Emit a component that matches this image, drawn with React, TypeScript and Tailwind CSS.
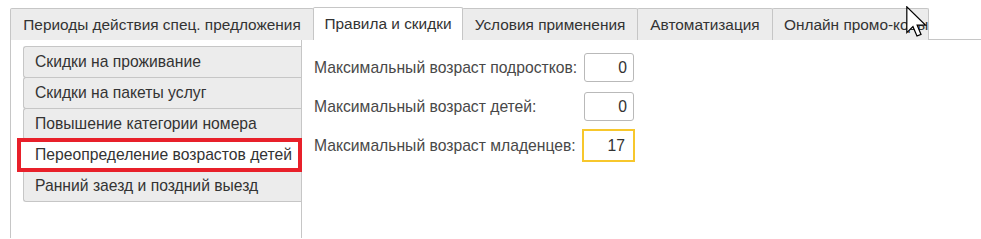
import React from "react"

const tabs = [
  { label: "Периоды действия спец. предложения", w: "w-[304px]" },
  { label: "Правила и скидки", w: "w-[150px]", active: true },
  { label: "Условия применения", w: "w-[176px]" },
  { label: "Автоматизация", w: "w-[136px]" },
  { label: "Онлайн промо-коды", w: "w-[157px]" },
]

const menu = [
  "Скидки на проживание",
  "Скидки на пакеты услуг",
  "Повышение категории номера",
  "Переопределение возрастов детей",
  "Ранний заезд и поздний выезд",
]

function Cursor() {
  return (
    <svg
      className="absolute left-[906px] top-[6px]"
      width="21"
      height="31"
      viewBox="0 0 13 19.2"
    >
      <path
        d="M0.5 0.5 L0.5 16.5 L4.3 12.8 L6.8 18.6 L9.3 17.6 L6.9 11.9 L12.2 11.9 Z"
        fill="#ffffff"
        stroke="#000000"
        strokeWidth="0.75"
        strokeLinejoin="miter"
      />
    </svg>
  )
}

export default function App() {
  return (
    <div className="relative w-[981px] h-[239px] bg-white overflow-hidden pt-2 pl-[10px] text-[15.7px] text-[#333333] font-['Liberation_Sans',Arial,sans-serif]">
      {/* TABS */}
      <div className="flex items-end h-[32px] text-[15.4px]">
        {tabs.map((t, i) => (
          <div
            key={t.label}
            className={`${t.w} ${i > 0 ? "-ml-px" : ""} ${
              t.active ? "bg-white h-[33px] relative z-10" : "bg-[#ececec] h-[32px]"
            } border border-b-0 border-[#c6c6c6] rounded-t-[2px] flex items-center whitespace-nowrap ${
              i === tabs.length - 1 ? "justify-start pl-[11px] overflow-hidden" : "justify-center"
            }`}
          >
            {t.label}
          </div>
        ))}
      </div>

      {/* PANEL */}
      <div className="flex h-[199px] border-t border-l border-[#c6c6c6] -mt-px">
        {/* LEFT MENU */}
        <div className="w-[291px] border-r border-[#c6c6c6] pl-[12px] pt-[6px] flex flex-col">
          {menu.map((m, i) => {
            const selected = i === 3
            return (
              <div
                key={m}
                className={`relative h-[32px] ${i > 0 ? "-mt-px" : ""} border border-r-0 border-[#c6c6c6] rounded-l-[3px] flex items-center pl-[11px] whitespace-nowrap ${
                  selected ? "bg-white border-white z-10" : "bg-[#ececec]"
                }`}
              >
                {m}
                {selected && (
                  <div className="absolute -left-[7px] -top-[2px] -bottom-[2px] right-[-1px] border-[4px] border-[#e8202a]" />
                )}
              </div>
            )
          })}
        </div>

        {/* FORM */}
        <div className="pl-[12px] pt-[8px] flex flex-col text-[#484848]">
          {[
            { label: "Максимальный возраст подростков:", value: "0" },
            { label: "Максимальный возраст детей:", value: "0" },
            { label: "Максимальный возраст младенцев:", value: "17", focus: true },
          ].map((r) => (
            <div key={r.label} className="flex items-center h-[39px]">
              <div className="w-[270px] whitespace-nowrap">{r.label}</div>
              {r.focus ? (
                <div className="-ml-[2px] w-[53px] h-[33px] border-2 border-[#f7c72c] flex items-center justify-end pr-[8px] text-[#333333]">
                  {r.value}
                </div>
              ) : (
                <div className="w-[50px] h-[29px] border border-[#b9b9b9] rounded-[3px] flex items-center justify-end pr-[6px] text-[#333333]">
                  {r.value}
                </div>
              )}
            </div>
          ))}
        </div>
      </div>

      <Cursor />
    </div>
  )
}
